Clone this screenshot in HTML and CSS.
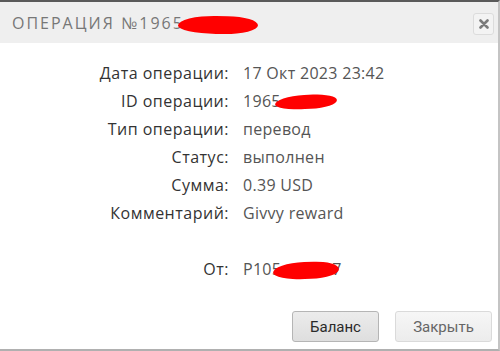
FILE: index.html
```html
<!DOCTYPE html>
<html lang="ru">
<head>
<meta charset="utf-8">
<link rel="stylesheet" href="styles.css">
</head>
<body>
<div class="dialog">
  <div class="header">
    <div class="title">ОПЕРАЦИЯ №1965<span class="redact r-title"></span></div>
    <button class="close" aria-label="close">
      <svg width="10" height="10" viewBox="0 0 10 10"><path d="M1.5 1.5 L8.5 8.5 M8.5 1.5 L1.5 8.5" stroke="#7a7a7a" stroke-width="2.6" stroke-linecap="round"/></svg>
    </button>
  </div>
  <div class="body">
    <div class="rows">
      <div class="label">Дата операции:</div><div class="value">17 Окт 2023 23:42</div>
      <div class="label">ID операции:</div><div class="value">1965<span class="redact r-id"></span></div>
      <div class="label">Тип операции:</div><div class="value">перевод</div>
      <div class="label">Статус:</div><div class="value">выполнен</div>
      <div class="label">Сумма:</div><div class="value">0.39 USD</div>
      <div class="label">Комментарий:</div><div class="value">Givvy reward</div>
      <div class="label spacer"></div><div class="value spacer"></div>
      <div class="label">От:</div><div class="value">P105<span class="redact r-from"></span>7</div>
    </div>
  </div>
  <div class="footer">
    <button class="btn btn-primary">Баланс</button>
    <button class="btn btn-light">Закрыть</button>
  </div>
</div>
</body>
</html>
```

FILE: styles.css
```css
html, body {
  margin: 0;
  padding: 0;
  background: #fff;
}
.dialog {
  box-sizing: border-box;
  width: 500px;
  height: 351px;
  border-top: 2px solid #5a5a5a;
  border-right: 2px solid #c4c4c4;
  border-bottom: 2px solid #b0b0b0;
  display: flex;
  flex-direction: column;
  font-family: "Open Sans", "DejaVu Sans", sans-serif;
}
.header {
  height: 41px;
  background: #efefef;
  display: flex;
  align-items: center;
  justify-content: space-between;
  padding: 0 4px 0 12px;
}
.title {
  position: relative;
  font-size: 16px;
  letter-spacing: 2px;
  color: #777;
  font-weight: 500;
}
.close {
  box-sizing: border-box;
  width: 21px;
  height: 22px;
  border: 1px solid #dcdcdc;
  border-radius: 3px;
  background: #f3f3f3;
  display: flex;
  align-items: center;
  justify-content: center;
  padding: 0;
  margin-top: 2px;
}
.body {
  padding-top: 16px;
}
.rows {
  display: grid;
  grid-template-columns: 229px 1fr;
  column-gap: 14px;
  font-size: 16px;
  line-height: 28px;
}
.label {
  text-align: right;
  color: #333;
  font-weight: 500;
  letter-spacing: 0.5px;
}
.value {
  color: #555;
  letter-spacing: 0.3px;
  position: relative;
}
.spacer {
  height: 28px;
}
.redact {
  position: relative;
  display: inline-block;
  vertical-align: middle;
  background: #ff0000;
  border-radius: 50% 40% 45% 50% / 60% 50% 55% 45%;
}
.r-title {
  width: 80px;
  height: 18px;
  margin-left: -6px;
  top: 1px;
  transform: rotate(1deg);
}
.r-id {
  width: 62px;
  height: 14px;
  margin-left: -6px;
  top: -1px;
  transform: rotate(-3deg);
}
.r-from {
  width: 66px;
  height: 17px;
  margin-left: -8px;
  margin-right: -7px;
  top: 0;
  transform: rotate(-2deg);
}
.footer {
  margin-top: auto;
  display: flex;
  justify-content: flex-end;
  gap: 16px;
  padding: 0 6px 7px 0;
}
.btn {
  box-sizing: border-box;
  height: 31px;
  font-family: Roboto, "Liberation Sans", sans-serif;
  font-size: 15px;
  border-radius: 3px;
  padding: 0;
}
.btn-primary {
  width: 87px;
  color: #2a2a2a;
  background: linear-gradient(#ececec, #dedede);
  border: 1px solid #b5b5b5;
}
.btn-light {
  width: 97px;
  color: #666;
  background: linear-gradient(#f6f6f6, #ececec);
  border: 1px solid #dadada;
}
```
